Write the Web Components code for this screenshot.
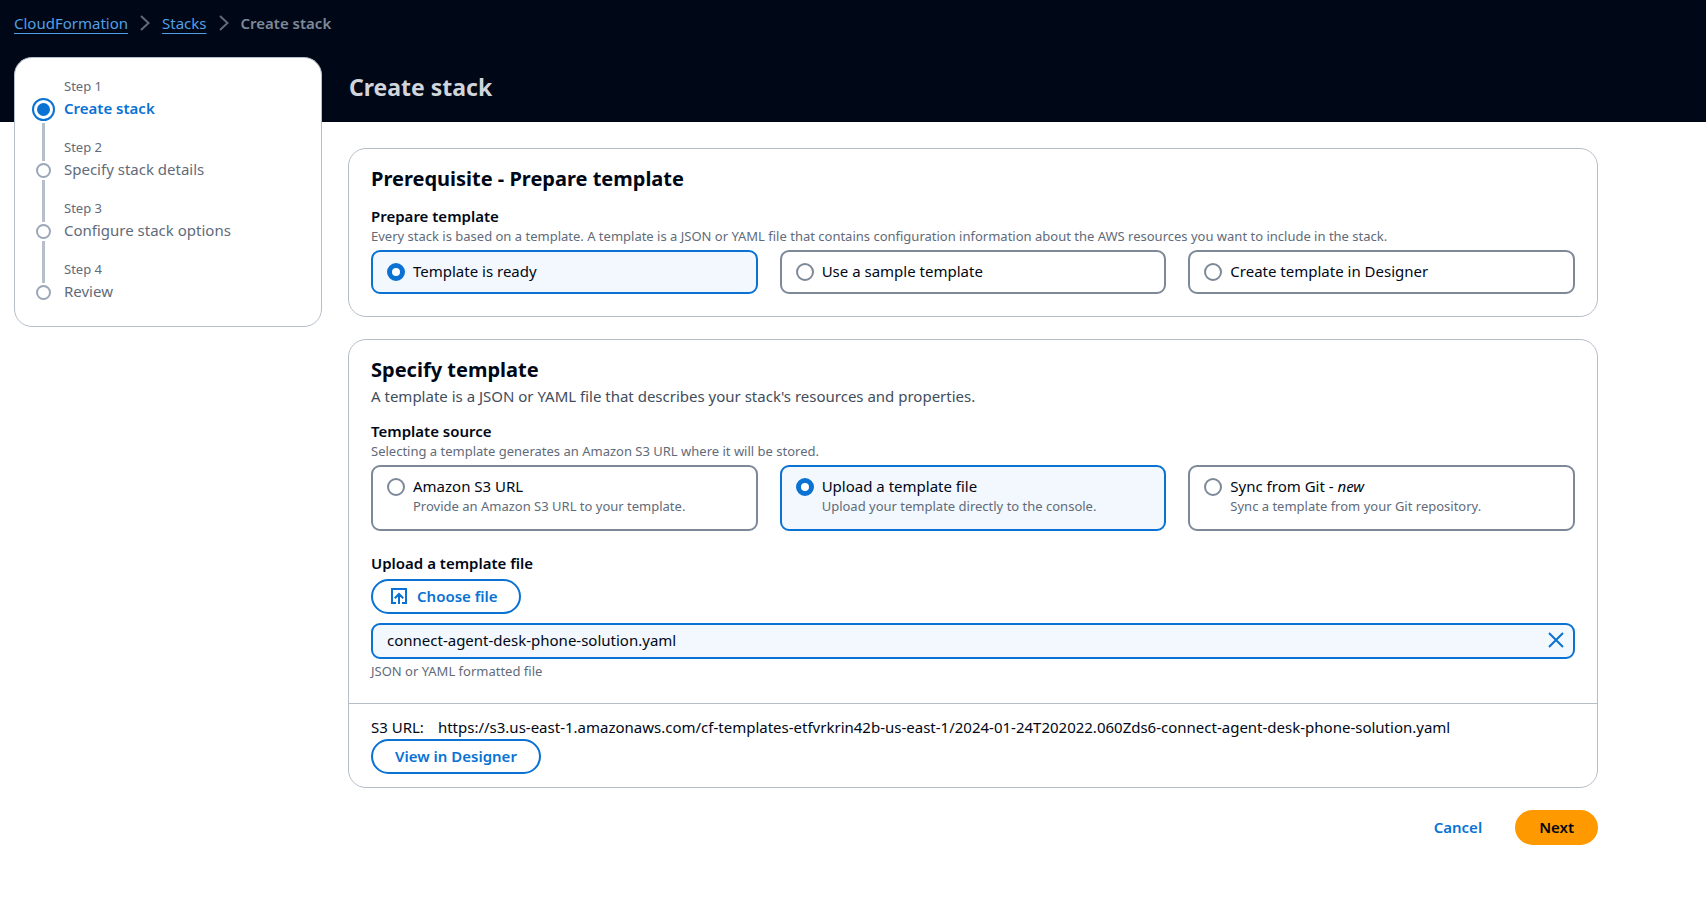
<!DOCTYPE html>
<html lang="en">
<head>
<meta charset="utf-8">
<title>Create stack - CloudFormation</title>
<style>
  :root {
    --ink: #000716;
    --muted: #5f6b7a;
    --body: #414d5c;
    --blue: #0972d3;
    --tint: #f2f8fd;
    --line: #b6bec9;
    --control: #7d8998;
    --orange: #ff9900;
  }
  body {
    margin: 0;
    background: #fff;
    color: var(--ink);
    font: 400 15px/22px "Noto Sans", "Open Sans", sans-serif;
  }
</style>
</head>
<body>
<cf-breadcrumbs>
  <a href="#cloudformation">CloudFormation</a>
  <a href="#stacks">Stacks</a>
  <span aria-current="page">Create stack</span>
</cf-breadcrumbs>

<cf-layout>
  <cf-steps slot="nav">
    <cf-step step="Step 1" current>Create stack</cf-step>
    <cf-step step="Step 2">Specify stack details</cf-step>
    <cf-step step="Step 3">Configure stack options</cf-step>
    <cf-step step="Step 4">Review</cf-step>
  </cf-steps>
  <span slot="title">Create stack</span>

  <cf-card heading="Prerequisite - Prepare template">
    <cf-tiles name="prepare" label="Prepare template"
      hint="Every stack is based on a template. A template is a JSON or YAML file that contains configuration information about the AWS resources you want to include in the stack.">
      <cf-tile checked>Template is ready</cf-tile>
      <cf-tile>Use a sample template</cf-tile>
      <cf-tile>Create template in Designer</cf-tile>
    </cf-tiles>
  </cf-card>

  <cf-card heading="Specify template"
    description="A template is a JSON or YAML file that describes your stack's resources and properties.">
    <cf-tiles name="source" label="Template source"
      hint="Selecting a template generates an Amazon S3 URL where it will be stored.">
      <cf-tile description="Provide an Amazon S3 URL to your template.">Amazon S3 URL</cf-tile>
      <cf-tile checked description="Upload your template directly to the console.">Upload a template file</cf-tile>
      <cf-tile description="Sync a template from your Git repository.">Sync from Git - <i>new</i></cf-tile>
    </cf-tiles>
    <cf-file-upload label="Upload a template file" file="connect-agent-desk-phone-solution.yaml"
      hint="JSON or YAML formatted file"></cf-file-upload>
    <cf-s3-url slot="footer"
      url="https://s3.us-east-1.amazonaws.com/cf-templates-etfvrkrin42b-us-east-1/2024-01-24T202022.060Zds6-connect-agent-desk-phone-solution.yaml"></cf-s3-url>
  </cf-card>

  <cf-actions>
    <cf-button variant="link">Cancel</cf-button>
    <cf-button variant="primary">Next</cf-button>
  </cf-actions>
</cf-layout>

<script>
class CfElement extends HTMLElement {
  connectedCallback() {
    if (this.shadowRoot) return;
    const root = this.attachShadow({ mode: 'open' });
    root.innerHTML = `<style>*{box-sizing:border-box}:host{display:block}${this.css()}</style>${this.html()}`;
  }
  css() { return ''; }
  html() { return '<slot></slot>'; }
  attr(name) { return this.getAttribute(name) || ''; }
}

customElements.define('cf-breadcrumbs', class extends CfElement {
  css() {
    return `
      :host { background: var(--ink); padding: 12px 14px 23px; }
      ol { display: flex; align-items: center; list-style: none; margin: 0; padding: 0; }
      li { display: flex; align-items: center; }
      svg { margin: 0 12px; width: 10px; height: 16px; fill: none; stroke: var(--muted); stroke-width: 2; }
      a { color: #539fe5; text-decoration: underline; text-decoration-thickness: 1px; text-underline-offset: 4px; }
      span { color: var(--control); font-weight: 600; }`;
  }
  html() {
    const chevron = '<svg viewBox="0 0 10 16" aria-hidden="true"><path d="M1 1l7.500 7-7.500 7"/></svg>';
    return `<nav aria-label="Breadcrumbs"><ol>${[...this.children]
      .map((el, i) => `<li>${i ? chevron : ''}${el.outerHTML}</li>`).join('')}</ol></nav>`;
  }
});

customElements.define('cf-layout', class extends CfElement {
  css() {
    return `
      :host { display: grid; grid-template-columns: 14px 308px minmax(0, 1fr); grid-template-rows: auto 1fr; }
      .banner { grid-area: 1 / 1 / 2 / 4; background: var(--ink); }
      .nav { grid-area: 1 / 2 / 3 / 3; }
      h1 { grid-area: 1 / 3 / 2 / 4; margin: 0; padding: 15px 27px 20px; color: #d1d5db; font-size: 23px; line-height: 30px; font-weight: 700; }
      main { grid-area: 2 / 3 / 3 / 4; margin: 26px 26px 40px; max-width: 1250px; display: flex; flex-direction: column; gap: 22px; }`;
  }
  html() {
    return `<div class="banner"></div><div class="nav"><slot name="nav"></slot></div>
      <h1><slot name="title"></slot></h1><main><slot></slot></main>`;
  }
});

customElements.define('cf-steps', class extends CfElement {
  css() {
    return `
      :host { background: #fff; border: 1px solid var(--line); border-radius: 18px; padding: 19px 17px 5px; }`;
  }
  html() { return '<nav aria-label="Steps"><slot></slot></nav>'; }
});

customElements.define('cf-step', class extends CfElement {
  css() {
    return `
      :host { display: flex; gap: 9px; color: var(--muted); }
      .rail { width: 23px; display: flex; flex-direction: column; align-items: center; gap: 2px; }
      .rail i { width: 3px; background: var(--line); }
      .before { height: 23px; }
      .after { flex: 1; }
      .dot { width: 15px; height: 15px; border: 2px solid #9ba7b6; border-radius: 50%; }
      .text { padding-bottom: 19px; }
      small { display: block; font-size: 13px; line-height: 18px; margin-bottom: 2px; }
      :host(:first-child) .before { height: 19px; background: none; }
      :host(:last-child) .after { background: none; }
      :host([current]) .dot { width: 23px; height: 23px; padding: 3px; border: 2px solid var(--blue); background: var(--blue) content-box; }
      :host([current]) .label { color: var(--blue); font-weight: 600; }`;
  }
  html() {
    return `<div class="rail"><i class="before"></i><div class="dot"></div><i class="after"></i></div>
      <div class="text"><small>${this.attr('step')}</small><div class="label"><slot></slot></div></div>`;
  }
});

customElements.define('cf-card', class extends CfElement {
  css() {
    return `
      :host { border: 1px solid var(--line); border-radius: 18px; }
      section { padding: 17px 22px 22px; }
      h2 { margin: 0; font-size: 20px; line-height: 26px; font-weight: 700; }
      p { margin: 2px 0 0; color: var(--body); }
      .content { margin-top: 13px; display: flex; flex-direction: column; gap: 21px; }
      footer { border-top: 1px solid var(--line); padding: 12px 22px 13px; }`;
  }
  html() {
    const p = this.attr('description');
    const footer = this.querySelector('[slot=footer]');
    return `<section><h2>${this.attr('heading')}</h2>${p ? `<p>${p}</p>` : ''}
      <div class="content"><slot></slot></div></section>
      ${footer ? '<footer><slot name="footer"></slot></footer>' : ''}`;
  }
});

customElements.define('cf-tiles', class extends CfElement {
  css() {
    return `
      .title { font-weight: 600; }
      .hint, small { display: block; color: var(--muted); font-size: 13px; line-height: 18px; }
      .tiles { margin-top: 5px; display: grid; grid-template-columns: repeat(3, minmax(0, 1fr)); gap: 22px; }
      label { display: flex; gap: 8px; padding: 8px 14px 10px; border: 2px solid var(--control); border-radius: 9px; cursor: pointer; }
      label:has(:checked) { border-color: var(--blue); background: var(--tint); }
      input { appearance: none; flex: none; width: 18px; height: 18px; margin: 3px 0 0; border: 2px solid var(--control); border-radius: 50%; background: #fff; }
      input:checked { border: 5px solid var(--blue); }
      small { margin-bottom: 4px; }`;
  }
  html() {
    const tiles = [...this.children].map(t => {
      const d = t.getAttribute('description');
      return `<label><input type="radio" name="${this.attr('name')}"${t.hasAttribute('checked') ? ' checked' : ''}>
        <span>${t.innerHTML}${d ? `<small>${d}</small>` : ''}</span></label>`;
    }).join('');
    return `<div role="radiogroup" aria-labelledby="title" aria-describedby="hint">
      <div class="title" id="title">${this.attr('label')}</div><div class="hint" id="hint">${this.attr('hint')}</div>
      <div class="tiles">${tiles}</div></div>`;
  }
});

customElements.define('cf-button', class extends CfElement {
  css() {
    return `
      :host { display: inline-block; }
      button { display: flex; align-items: center; gap: 10px; height: 35px; margin: 0; padding: 0 22px 2px; border: 2px solid var(--blue); border-radius: 18px;
        background: #fff; color: var(--blue); font: inherit; font-weight: 600; cursor: pointer; }
      :host([icon]) button { padding: 0 21px 2px 18px; }
      svg { width: 16px; height: 16px; fill: none; stroke: currentColor; stroke-width: 2; }
      :host([variant=link]) button { border-color: transparent; background: none; }
      :host([variant=primary]) button { border-color: var(--orange); background: var(--orange); color: var(--ink); }`;
  }
  html() {
    const icon = this.hasAttribute('icon')
      ? '<svg viewBox="0 0 16 16" aria-hidden="true"><path d="M5 15H1V1h14v14h-4M8 16V6M3.800 10.200L8 6l4.200 4.200"/></svg>' : '';
    return `<button type="button">${icon}<slot></slot></button>`;
  }
});

customElements.define('cf-file-upload', class extends CfElement {
  css() {
    return `
      .title { font-weight: 600; margin-bottom: 5px; }
      cf-button { display: block; width: fit-content; }
      .file { margin: 9px 0 3px; height: 36px; display: flex; align-items: center; justify-content: space-between; padding: 0 9px 2px 14px;
        border: 2px solid var(--blue); border-radius: 9px; background: var(--tint); }
      .clear { display: grid; margin: 0; padding: 0; border: 0; background: none; color: var(--blue); cursor: pointer; }
      svg { width: 16px; height: 16px; fill: none; stroke: currentColor; stroke-width: 2; }
      .hint { margin-bottom: 1px; color: var(--muted); font-size: 13px; line-height: 18px; }`;
  }
  html() {
    return `<div role="group" aria-labelledby="title" aria-describedby="hint">
      <div class="title" id="title">${this.attr('label')}</div>
      <cf-button icon>Choose file</cf-button>
      <div class="file"><span>${this.attr('file')}</span>
        <button class="clear" type="button" aria-label="Remove file"><svg viewBox="0 0 16 16" aria-hidden="true"><path d="M1 1l14 14M15 1L1 15"/></svg></button></div>
      <div class="hint" id="hint">${this.attr('hint')}</div></div>`;
  }
});

customElements.define('cf-s3-url', class extends CfElement {
  css() {
    return `
      .row { display: flex; gap: 14px; margin-bottom: 1px; }
      .key { flex: none; }
      .url { min-width: 0; overflow-wrap: anywhere; }
      cf-button { display: block; width: fit-content; }`;
  }
  html() {
    return `<div class="row"><span class="key">S3 URL:</span><span class="url">${this.attr('url')}</span></div>
      <cf-button>View in Designer</cf-button>`;
  }
});

customElements.define('cf-actions', class extends CfElement {
  css() { return ':host { display: flex; justify-content: flex-end; gap: 9px; }'; }
});
</script>
</body>
</html>
